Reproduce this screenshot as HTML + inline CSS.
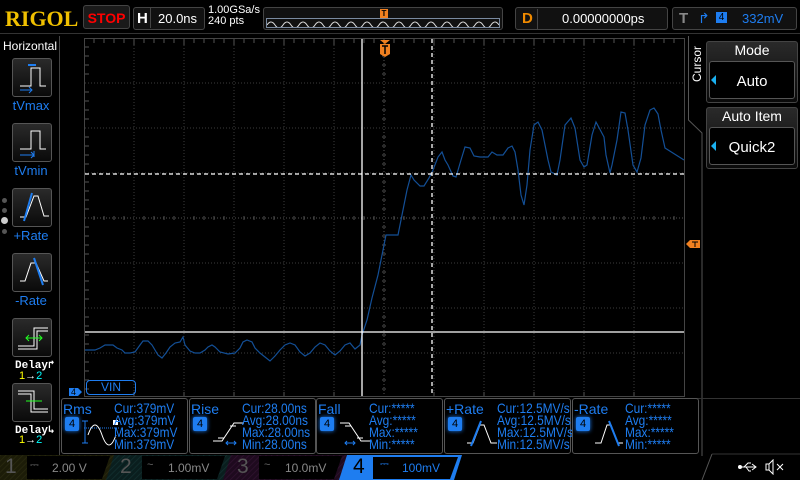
<!DOCTYPE html>
<html><head><meta charset="utf-8"><style>
*{margin:0;padding:0;box-sizing:border-box}
body{width:800px;height:480px;background:#000;overflow:hidden;position:relative;font-family:"Liberation Sans",sans-serif;color:#fff}
.a{position:absolute}
.btn{position:absolute;border:1px solid #555;border-radius:3px;background:linear-gradient(#2a2a2a,#0a0a0a)}
.lbl{position:absolute;color:#1e7df0;font-size:13px;text-align:center;width:60px}
.mb{position:absolute;top:398px;height:56px;border:1px solid #555;border-radius:3px;background:#000;font-size:14px;color:#1e7df0;line-height:12px}
.mb .t{position:absolute;left:1px;top:4px}
.mb .n{position:absolute;left:3px;top:18px;width:14px;height:14px;background:#1e7df0;color:#000;font-size:11px;text-align:center;line-height:14px;border-radius:2px;box-shadow:0 0 4px #1e7df0}
.mb .v{position:absolute;top:3px;white-space:pre;line-height:12px;font-size:14px;transform:scaleX(0.85);transform-origin:0 0}
</style></head><body>
<div class="a" style="left:5px;top:6px;font-family:'Liberation Serif',serif;font-weight:bold;font-size:22px;color:#f0c000">RIGOL</div>
<div class="a" style="left:83px;top:5px;width:47px;height:24px;border:1px solid #444;border-radius:3px;background:#1a1a1a;color:#f00;font-weight:bold;font-size:14px;text-align:center;line-height:24px">STOP</div>
<div class="a" style="left:133px;top:7px;width:72px;height:23px;border:1px solid #444;border-radius:3px;background:#111"></div>
<div class="a" style="left:137px;top:10px;font-weight:bold;font-size:15px">H</div>
<div class="a" style="left:150px;top:8px;width:54px;height:20px;border-left:1px solid #444"></div>
<div class="a" style="left:158px;top:11px;font-size:13px">20.0ns</div>
<div class="a" style="left:208px;top:5px;font-size:11px;line-height:11px">1.00GSa/s<br>240 pts</div>
<div class="a" style="left:263px;top:7px;width:240px;height:23px;border:1px solid #444;border-radius:3px;background:#111"></div>
<div class="a" style="left:266px;top:18px;width:234px;height:10px;border:1px solid #7a8aa0"></div>
<svg class="a" style="left:267px;top:19px" width="232" height="8"><path d="M0 6 Q4 0 8 6 T16 6 T24 6 T32 6 T40 6 T48 6 T56 6 T64 6 T72 6 T80 6 T88 6 T96 6 T104 6 T112 6 T120 6 T128 6 T136 6 T144 6 T152 6 T160 6 T168 6 T176 6 T184 6 T192 6 T200 6 T208 6 T216 6 T224 6 T232 6" fill="none" stroke="#ddd" stroke-width="1"/></svg>
<div class="a" style="left:380px;top:9px;width:8px;height:9px;background:#f08020;color:#000;font-size:8px;text-align:center;line-height:9px;font-weight:bold">T</div>
<div class="a" style="left:515px;top:7px;width:153px;height:23px;border:1px solid #444;border-radius:3px;background:#111"></div>
<div class="a" style="left:522px;top:10px;font-weight:bold;font-size:15px;color:#f08a00">D</div>
<div class="a" style="left:537px;top:9px;width:130px;height:20px;border-left:1px solid #444"></div>
<div class="a" style="left:562px;top:11px;font-size:13px">0.00000000ps</div>
<div class="a" style="left:672px;top:7px;width:125px;height:23px;border:1px solid #444;border-radius:3px;background:#111"></div>
<div class="a" style="left:679px;top:10px;font-weight:bold;font-size:15px;color:#888">T</div>
<div class="a" style="left:698px;top:10px;font-size:14px;color:#1e7df0">&#8625;</div>
<div class="a" style="left:716px;top:12px;width:11px;height:11px;background:#1e7df0;color:#000;font-size:10px;text-align:center;line-height:11px">4</div>
<div class="a" style="left:742px;top:11px;font-size:13px;color:#1e7df0">332mV</div>
<div class="a" style="left:0;top:33px;width:800px;height:1px;background:#333"></div>

<div class="a" style="left:0;top:36px;width:60px;height:420px;border-right:1px solid #444"></div>
<div class="a" style="left:3px;top:39px;font-size:12px">Horizontal</div>
<div class="btn" style="left:12px;top:58px;width:40px;height:39px"></div>
<svg class="a" style="left:12px;top:58px" width="40" height="39"><path d="M8 28 H19 V10 H28 V28 H34" fill="none" stroke="#fff"/><path d="M16 7 H24" stroke="#1e7df0" stroke-width="2"/><path d="M8 32 H20 M17 29 L20 32 L17 35" stroke="#1e7df0" fill="none"/></svg>
<div class="lbl" style="left:1px;top:98px">tVmax</div>
<div class="btn" style="left:12px;top:123px;width:40px;height:39px"></div>
<svg class="a" style="left:12px;top:123px" width="40" height="39"><path d="M8 26 H19 V8 H28 V26 H34" fill="none" stroke="#fff"/><path d="M8 32 H22 M19 29 L22 32 L19 35 M22 28 V34" stroke="#1e7df0" fill="none"/></svg>
<div class="lbl" style="left:1px;top:163px">tVmin</div>
<div class="btn" style="left:12px;top:188px;width:40px;height:39px"></div>
<svg class="a" style="left:12px;top:188px" width="40" height="39"><path d="M8 29 H14 L22 8 H26 L32 28 H37" fill="none" stroke="#fff"/><path d="M12 33 L20 5" stroke="#1e7df0" stroke-width="2"/></svg>
<div class="lbl" style="left:1px;top:228px">+Rate</div>
<div class="btn" style="left:12px;top:253px;width:40px;height:39px"></div>
<svg class="a" style="left:12px;top:253px" width="40" height="39"><path d="M8 28 H13 L19 10 H24 L32 28 H36" fill="none" stroke="#fff"/><path d="M22 5 L31 32" stroke="#1e7df0" stroke-width="2"/></svg>
<div class="lbl" style="left:1px;top:293px">-Rate</div>
<div class="btn" style="left:12px;top:318px;width:40px;height:39px"></div>
<svg class="a" style="left:12px;top:318px" width="40" height="39"><path d="M6 28 H22 V10 H36 M6 31 H25 V13 H36" fill="none" stroke="#fff"/><path d="M14 20 H30 M17 17 L14 20 L17 23 M27 17 L30 20 L27 23" stroke="#2f2" fill="none"/></svg>
<div class="a" style="left:15px;top:358px;font-family:'Liberation Mono',monospace;font-size:11px;font-weight:bold">Delay&#8625;</div>
<div class="a" style="left:19px;top:370px;font-size:11px"><span style="color:#ff0">1</span>→<span style="color:#0ff">2</span></div>
<div class="btn" style="left:12px;top:383px;width:40px;height:39px"></div>
<svg class="a" style="left:12px;top:383px" width="40" height="39"><path d="M6 8 H22 V26 H36 M6 11 H19 V29 H36" fill="none" stroke="#fff"/><path d="M14 18 H30" stroke="#2f2"/></svg>
<div class="a" style="left:15px;top:423px;font-family:'Liberation Mono',monospace;font-size:11px;font-weight:bold">Delay&#8627;</div>
<div class="a" style="left:19px;top:434px;font-size:11px"><span style="color:#ff0">1</span>→<span style="color:#0ff">2</span></div>
<div class="a" style="left:2px;top:198px;width:5px;height:5px;border-radius:50%;background:#555"></div>
<div class="a" style="left:2px;top:208px;width:5px;height:5px;border-radius:50%;background:#555"></div>
<div class="a" style="left:1px;top:217px;width:7px;height:7px;border-radius:50%;background:#ccc"></div>
<div class="a" style="left:2px;top:229px;width:5px;height:5px;border-radius:50%;background:#555"></div>

<svg class="a" style="left:0;top:0" width="800" height="480">
<rect x="84.5" y="38.5" width="600" height="358" fill="none" stroke="#444"/>
<g stroke="#3c3c3c" stroke-dasharray="1,2">
<path d="M134 39V396M184 39V396M234 39V396M284 39V396M334 39V396M434 39V396M484 39V396M534 39V396M584 39V396M634 39V396"/>
<path d="M85 83H684M85 128H684M85 173H684M85 263H684M85 308H684M85 353H684"/>
</g>
<g stroke="#555">
<path d="M384 39V396M85 218H684" stroke-dasharray="1,2"/>
</g>
<g stroke="#555">
<path d="M94 39v4M104 39v4M114 39v4M124 39v4M144 39v4M154 39v4M164 39v4M174 39v4M194 39v4M204 39v4M214 39v4M224 39v4M244 39v4M254 39v4M264 39v4M274 39v4M294 39v4M304 39v4M314 39v4M324 39v4M344 39v4M354 39v4M364 39v4M374 39v4M394 39v4M404 39v4M414 39v4M424 39v4M444 39v4M454 39v4M464 39v4M474 39v4M494 39v4M504 39v4M514 39v4M524 39v4M544 39v4M554 39v4M564 39v4M574 39v4M594 39v4M604 39v4M614 39v4M624 39v4M644 39v4M654 39v4M664 39v4M674 39v4M134 39v6M184 39v6M234 39v6M284 39v6M334 39v6M384 39v6M434 39v6M484 39v6M534 39v6M584 39v6M634 39v6"/>
<path d="M85 47h4M85 56h4M85 65h4M85 74h4M85 92h4M85 101h4M85 110h4M85 119h4M85 137h4M85 146h4M85 155h4M85 164h4M85 182h4M85 191h4M85 200h4M85 209h4M85 227h4M85 236h4M85 245h4M85 254h4M85 272h4M85 281h4M85 290h4M85 299h4M85 317h4M85 326h4M85 335h4M85 344h4M85 362h4M85 371h4M85 380h4M85 389h4"/>
<path d="M382 47h4M382 56h4M382 65h4M382 74h4M382 92h4M382 101h4M382 110h4M382 119h4M382 137h4M382 146h4M382 155h4M382 164h4M382 182h4M382 191h4M382 200h4M382 209h4M382 227h4M382 236h4M382 245h4M382 254h4M382 272h4M382 281h4M382 290h4M382 299h4M382 317h4M382 326h4M382 335h4M382 344h4M382 362h4M382 371h4M382 380h4M382 389h4"/>
<path d="M94 216v4M104 216v4M114 216v4M124 216v4M144 216v4M154 216v4M164 216v4M174 216v4M194 216v4M204 216v4M214 216v4M224 216v4M244 216v4M254 216v4M264 216v4M274 216v4M294 216v4M304 216v4M314 216v4M324 216v4M344 216v4M354 216v4M364 216v4M374 216v4M394 216v4M404 216v4M414 216v4M424 216v4M444 216v4M454 216v4M464 216v4M474 216v4M494 216v4M504 216v4M514 216v4M524 216v4M544 216v4M554 216v4M564 216v4M574 216v4M594 216v4M604 216v4M614 216v4M624 216v4M644 216v4M654 216v4M664 216v4M674 216v4"/>
<path d="M134 392v4M184 392v4M234 392v4M284 392v4M334 392v4M434 392v4M484 392v4M534 392v4M584 392v4M634 392v4"/>
</g>
<polyline fill="none" stroke="#134f96" stroke-width="1.2" points="85,350 95,350 100,348 105,345 113,345 117,348 122,350 125,353 130,353 135,352 140,345 143,341 148,341 152,345 155,350 158,355 162,358 166,353 170,347 175,343 180,342 183,337 185,345 190,351 195,353 200,353 205,350 208,347 212,345 215,347 220,352 228,354 235,353 240,348 243,342 247,340 252,342 255,348 260,353 265,357 270,361 275,356 280,350 285,345 290,343 295,345 300,352 305,356 310,353 315,347 320,343 325,345 330,351 335,355 340,351 345,345 350,343 355,349 360,345 362,335 367,320 372,298 378,275 383,250 386,235 398,235 402,215 407,190 411,175 414,180 420,186 424,186 429,178 433,170 438,157 442,152 445,160 448,165 453,176 456,177 461,160 465,147 470,148 474,156 480,157 488,157 492,152 497,155 503,155 508,148 512,146 515,152 518,170 521,195 524,205 527,185 530,150 534,125 538,122 542,130 548,160 551,172 557,175 560,160 565,125 571,118 575,128 580,160 584,167 587,165 592,135 596,122 604,137 606,155 610,173 612,165 617,140 621,112 625,113 628,130 633,165 637,172 641,158 645,125 650,110 654,108 658,114 661,130 665,148 684,160"/>
<path d="M362 39V396M85 332H684" stroke="#fff" stroke-width="1.3"/>
<path d="M432 39V396M85 174H684" stroke="#fff" stroke-width="1.3" stroke-dasharray="4,3"/>
<path d="M380 40H390L385 44Z M380 44H390V54L385 57L380 54Z" fill="#f08020"/>
<path d="M382 46H388M385 46V54" stroke="#000" stroke-width="1.5"/>
<path d="M686 244L690 240H700V248H690Z" fill="#f08020"/>
<path d="M692 242H698M695 242V247" stroke="#000"/>
<path d="M69 388H78L82 392L78 396H69Z" fill="#1e7df0"/>
<text x="71" y="395" font-size="9" fill="#000" font-family="Liberation Sans">4</text>
<path d="M688.5 36V120L702 133V456" stroke="#555" fill="none"/>
<path d="M684 398.5H800" stroke="#333"/>
<path d="M712 454H800" stroke="#333"/>
<path d="M712 454L702 480" stroke="#555"/>
</svg>
<div class="a" style="left:86px;top:380px;width:50px;height:15px;border:1.5px solid #1e7df0;border-radius:4px;color:#1e7df0;font-size:12px;text-align:center;line-height:12px">VIN</div>

<div class="a" style="left:690px;top:82px;transform:rotate(-90deg);transform-origin:0 0;font-size:12px;width:50px">Cursor</div>
<div class="btn" style="left:706px;top:41px;width:92px;height:62px;border-color:#444"></div>
<div class="a" style="left:706px;top:42px;width:92px;text-align:center;font-size:14px">Mode</div>
<div class="a" style="left:709px;top:61px;width:86px;height:38px;border:1px solid #555;border-radius:3px;background:#000"></div>
<div class="a" style="left:711px;top:75px;width:0;height:0;border-top:5px solid transparent;border-bottom:5px solid transparent;border-right:5px solid #1ab0f0"></div>
<div class="a" style="left:709px;top:73px;width:86px;text-align:center;font-size:15px">Auto</div>
<div class="btn" style="left:706px;top:107px;width:92px;height:62px;border-color:#444"></div>
<div class="a" style="left:706px;top:108px;width:92px;text-align:center;font-size:14px">Auto Item</div>
<div class="a" style="left:709px;top:127px;width:86px;height:38px;border:1px solid #555;border-radius:3px;background:#000"></div>
<div class="a" style="left:711px;top:141px;width:0;height:0;border-top:5px solid transparent;border-bottom:5px solid transparent;border-right:5px solid #1ab0f0"></div>
<div class="a" style="left:709px;top:139px;width:86px;text-align:center;font-size:15px">Quick2</div>

<div class="mb" style="left:61px;width:127px"><div class="t">Rms</div><div class="n">4</div>
<svg class="a" style="left:18px;top:16px" width="42" height="32"><path d="M2 6H8M5 6V28M2 28H8" stroke="#1e7df0"/><path d="M4 13H40" stroke="#1e7df0" stroke-dasharray="1,1"/><path d="M8 20 Q15 0 22 20 T36 20" stroke="#fff" fill="none"/><rect x="33" y="5" width="5" height="5" fill="#fff"/></svg>
<div class="v" style="left:52px">Cur:379mV
Avg:379mV
Max:379mV
Min:379mV</div></div>
<div class="mb" style="left:189px;width:127px"><div class="t">Rise</div><div class="n">4</div>
<svg class="a" style="left:18px;top:16px" width="42" height="32"><path d="M5 26H14L26 8H36M10 23H16M22 11H28" stroke="#fff" fill="none"/><path d="M18 28H28M20 26L18 28L20 30M26 26L28 28L26 30" stroke="#1e7df0" fill="none"/></svg>
<div class="v" style="left:52px">Cur:28.00ns
Avg:28.00ns
Max:28.00ns
Min:28.00ns</div></div>
<div class="mb" style="left:316px;width:127px"><div class="t">Fall</div><div class="n">4</div>
<svg class="a" style="left:18px;top:16px" width="42" height="32"><path d="M5 8H14L26 26H36M10 11H16M22 23H28" stroke="#fff" fill="none"/><path d="M10 28H20M12 26L10 28L12 30M18 26L20 28L18 30" stroke="#1e7df0" fill="none"/></svg>
<div class="v" style="left:52px">Cur:*****
Avg:*****
Max:*****
Min:*****</div></div>
<div class="mb" style="left:444px;width:127px"><div class="t">+Rate</div><div class="n">4</div>
<svg class="a" style="left:18px;top:16px" width="42" height="32"><path d="M4 28H10L17 10H21L28 28H34" stroke="#fff" fill="none"/><path d="M8 31L18 6" stroke="#1e7df0" stroke-width="2"/></svg>
<div class="v" style="left:52px">Cur:12.5MV/s
Avg:12.5MV/s
Max:12.5MV/s
Min:12.5MV/s</div></div>
<div class="mb" style="left:572px;width:127px"><div class="t">-Rate</div><div class="n">4</div>
<svg class="a" style="left:18px;top:16px" width="42" height="32"><path d="M4 28H10L16 10H20L27 28H32" stroke="#fff" fill="none"/><path d="M18 6L28 31" stroke="#1e7df0" stroke-width="2"/></svg>
<div class="v" style="left:52px">Cur:*****
Avg:*****
Max:*****
Min:*****</div></div>

<svg class="a" style="left:0;top:455px" width="800" height="25">
<defs>
<pattern id="h1" width="4" height="4" patternUnits="userSpaceOnUse" patternTransform="rotate(45)"><rect width="4" height="4" fill="#1c1c08"/><path d="M0 0V4" stroke="#2a2a10" stroke-width="1.5"/></pattern>
<pattern id="h2" width="4" height="4" patternUnits="userSpaceOnUse" patternTransform="rotate(45)"><rect width="4" height="4" fill="#0a1e1e"/><path d="M0 0V4" stroke="#123030" stroke-width="1.5"/></pattern>
<pattern id="h3" width="4" height="4" patternUnits="userSpaceOnUse" patternTransform="rotate(45)"><rect width="4" height="4" fill="#1e0a1e"/><path d="M0 0V4" stroke="#301230" stroke-width="1.5"/></pattern>
</defs>
<path d="M0 0H117L109 25H0Z" fill="url(#h1)"/>
<path d="M27 1H110L102 24H27Z" fill="#000"/>
<path d="M114 0H232L224 25H106Z" fill="url(#h2)"/>
<path d="M142 1H225L217 24H142Z" fill="#000"/>
<path d="M231 0H349L341 25H223Z" fill="url(#h3)"/>
<path d="M259 1H342L334 24H259Z" fill="#000"/>
<path d="M347 0H462L454 25H339Z" fill="#1e7df0"/>
<path d="M373 2H458L450 24H373Z" fill="#000"/>
</svg>
<div class="a" style="left:5px;top:455px;font-size:21px;color:#555">1</div>
<div class="a" style="left:30px;top:459px;font-size:11px;color:#666">⎓</div>
<div class="a" style="left:52px;top:461px;font-size:12px;color:#888">2.00 V</div>
<div class="a" style="left:120px;top:455px;font-size:21px;color:#555">2</div>
<div class="a" style="left:147px;top:459px;font-size:11px;color:#666">~</div>
<div class="a" style="left:168px;top:461px;font-size:12px;color:#888">1.00mV</div>
<div class="a" style="left:237px;top:455px;font-size:21px;color:#555">3</div>
<div class="a" style="left:264px;top:459px;font-size:11px;color:#666">~</div>
<div class="a" style="left:285px;top:461px;font-size:12px;color:#888">10.0mV</div>
<div class="a" style="left:353px;top:455px;font-size:21px;color:#000">4</div>
<div class="a" style="left:380px;top:458px;font-size:11px;color:#1e7df0">⎓</div>
<div class="a" style="left:402px;top:461px;font-size:12px;color:#1e7df0">100mV</div>
<svg class="a" style="left:738px;top:461px" width="22" height="12"><path d="M2 6H18M14 3L18 6L14 9M6 6L10 2H13M8 6L11 10H13" stroke="#fff" fill="none"/><circle cx="2" cy="6" r="2" fill="#fff"/></svg>
<svg class="a" style="left:765px;top:459px" width="22" height="16"><path d="M1 5H4L8 1V15L4 11H1Z M4 5V11" stroke="#fff" fill="none"/><path d="M12 5L18 11M18 5L12 11" stroke="#fff"/></svg>
</body></html>
